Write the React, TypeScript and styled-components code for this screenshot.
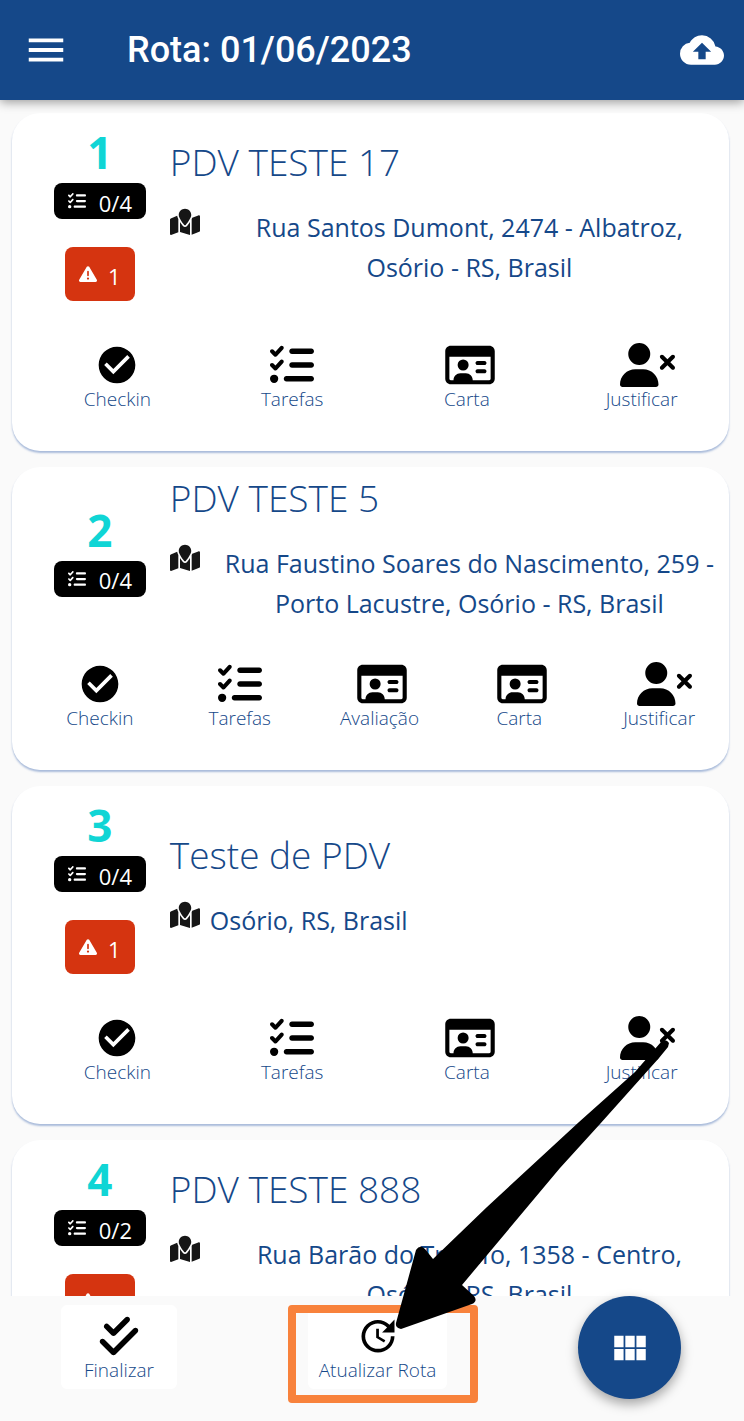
import React from "react";
import styled, { createGlobalStyle } from "styled-components";
import {
  FaCheckDouble,
  FaListCheck,
  FaMapLocation,
  FaRegIdCard,
  FaTriangleExclamation,
  FaUserXmark,
} from "react-icons/fa6";
import { MdBackup, MdCheckCircle, MdMenu, MdUpdate, MdViewModule } from "react-icons/md";

const navy = "#154889";

const GlobalStyle = createGlobalStyle`
  *, *::before, *::after { box-sizing: border-box; }
  body {
    margin: 0;
    background: #fafafa;
    color: ${navy};
    font-family: "Open Sans", Lato, sans-serif;
    font-weight: 300;
  }
  button {
    margin: 0;
    padding: 0;
    border: 0;
    background: none;
    color: inherit;
    font: inherit;
    cursor: pointer;
  }
  svg { display: block; flex: none; }
`;

const Screen = styled.div`
  display: flex;
  flex-direction: column;
  height: 100vh;
  overflow: hidden;
`;

const TopBar = styled.header`
  display: flex;
  align-items: center;
  flex: none;
  height: 100px;
  padding: 0 20px 0 23px;
  background: ${navy};
  color: #fff;
  box-shadow: 0 2px 10px rgba(0, 0, 0, 0.4);
  z-index: 1;
`;

const BarTitle = styled.h1`
  flex: 1;
  margin: 0 0 0 58px;
  font: 500 36px/48px Roboto, sans-serif;
`;

const BarButton = styled.button<{ $size: number }>`
  svg {
    width: ${(p) => p.$size}px;
    height: ${(p) => p.$size}px;
  }
`;

const StopList = styled.main`
  display: flex;
  flex-direction: column;
  gap: 16px;
  flex: 1;
  min-height: 0;
  padding: 13px 15px 0 12px;
  overflow: hidden;
`;

const Card = styled.article`
  flex: none;
  padding: 8px 0 40px 18px;
  border-radius: 28px;
  background: #fff;
  box-shadow: 0 2px 2px rgba(21, 72, 160, 0.35);
`;

const Summary = styled.div`
  display: flex;
  align-items: center;
`;

const Status = styled.div`
  display: flex;
  flex-direction: column;
  align-items: center;
  width: 20%;
  padding-bottom: 3px;
`;

const Order = styled.span`
  color: #10d5d5;
  font: 700 44px/62px "Noto Sans", sans-serif;
`;

const Badge = styled.span<{ $alert?: boolean }>`
  display: flex;
  align-items: center;
  gap: ${(p) => (p.$alert ? 11 : 13)}px;
  height: ${(p) => (p.$alert ? 54 : 36)}px;
  margin-top: ${(p) => (p.$alert ? 28 : 0)}px;
  padding: 0 14px;
  border-radius: 8px;
  background: ${(p) => (p.$alert ? "#d53410" : "#000")};
  color: #fff;
  font-size: 22px;
  line-height: 24px;
  font-weight: 400;

  svg {
    width: 18px;
    height: 18px;
  }
`;

const BadgeText = styled.span`
  padding-top: 3px;
`;

const Details = styled.div`
  display: flex;
  flex-direction: column;
  flex: 1;
  gap: 22px;
`;

const StopName = styled.h2`
  margin: 0;
  font-size: 37px;
  line-height: 46px;
  font-weight: 300;
`;

const Place = styled.div`
  display: flex;
  align-items: flex-start;
  gap: 10px;

  svg {
    width: 30px;
    height: 30px;
    color: #161616;
  }
`;

const Address = styled.p`
  margin: 0;
  font-size: 25px;
  line-height: 40px;
  font-weight: 400;
  text-align: center;
`;

const Actions = styled.nav`
  display: flex;
  padding-top: 39px;
`;

const Action = styled.button`
  display: flex;
  flex: 1 1 0;
  flex-direction: column;
  align-items: center;
`;

const ActionIcon = styled.span<{ $glyphWidth: number }>`
  display: flex;
  width: 44px;
  height: 44px;
  color: #000;

  svg {
    width: ${(p) => p.$glyphWidth}px;
    height: 44px;
  }
`;

const ActionLabel = styled.span`
  font-size: 19px;
  line-height: 24px;
`;

const Footer = styled.footer`
  display: flex;
  justify-content: space-between;
  align-items: flex-start;
  flex: none;
  height: 125px;
  padding: 0 63px 0 61px;
`;

const FooterAction = styled.button<{ $minWidth: number }>`
  display: flex;
  flex-direction: column;
  align-items: center;
  min-width: ${(p) => p.$minWidth}px;
  height: 84px;
  margin-top: 9px;
  padding-top: 9px;
  border-radius: 6px;
  background: #fff;

  svg {
    width: 44px;
    height: 44px;
    color: #000;
  }
`;

const Highlighted = styled.div`
  position: relative;
`;

const Frame = styled.span`
  position: absolute;
  top: 9px;
  right: -31px;
  bottom: -14px;
  left: -20px;
  border: 8px solid #f8823c;
  border-radius: 4px;
  pointer-events: none;
`;

const Pointer = styled.svg`
  position: absolute;
  right: -225px;
  bottom: 60px;
  z-index: 2;
  pointer-events: none;
`;

const Fab = styled.button`
  display: flex;
  align-items: center;
  justify-content: center;
  width: 103px;
  height: 103px;
  border-radius: 50%;
  background: ${navy};
  color: #fff;
  box-shadow: 0 5px 12px rgba(0, 0, 0, 0.35);

  svg {
    width: 42px;
    height: 42px;
  }
`;

type ActionKind = "checkin" | "tarefas" | "avaliacao" | "carta" | "justificar";

const actionKinds: Record<ActionKind, { label: string; icon: React.ReactNode; width: number }> = {
  checkin: { label: "Checkin", icon: <MdCheckCircle />, width: 44 },
  tarefas: { label: "Tarefas", icon: <FaListCheck />, width: 44 },
  avaliacao: { label: "Avaliação", icon: <FaRegIdCard />, width: 50 },
  carta: { label: "Carta", icon: <FaRegIdCard />, width: 50 },
  justificar: { label: "Justificar", icon: <FaUserXmark />, width: 55 },
};

interface Stop {
  name: string;
  address: string;
  tasks: string;
  alerts?: number;
  actions: ActionKind[];
}

const basic: ActionKind[] = ["checkin", "tarefas", "carta", "justificar"];

const stops: Stop[] = [
  {
    name: "PDV TESTE 17",
    address: "Rua Santos Dumont, 2474 - Albatroz, Osório\u00a0- RS, Brasil",
    tasks: "0/4",
    alerts: 1,
    actions: basic,
  },
  {
    name: "PDV TESTE 5",
    address: "Rua Faustino Soares do Nascimento, 259 - Porto Lacustre, Osório - RS, Brasil",
    tasks: "0/4",
    actions: ["checkin", "tarefas", "avaliacao", "carta", "justificar"],
  },
  { name: "Teste de PDV", address: "Osório, RS, Brasil", tasks: "0/4", alerts: 1, actions: basic },
  {
    name: "PDV TESTE 888",
    address: "Rua Barão do Triunfo, 1358 - Centro, Osório\u00a0- RS, Brasil",
    tasks: "0/2",
    alerts: 1,
    actions: basic,
  },
];

function StopCard({ stop, order }: { stop: Stop; order: number }) {
  return (
    <Card>
      <Summary>
        <Status>
          <Order>{order}</Order>
          <Badge>
            <FaListCheck />
            <BadgeText>{stop.tasks}</BadgeText>
          </Badge>
          {stop.alerts && (
            <Badge $alert>
              <FaTriangleExclamation />
              <BadgeText>{stop.alerts}</BadgeText>
            </Badge>
          )}
        </Status>
        <Details>
          <StopName>{stop.name}</StopName>
          <Place>
            <FaMapLocation />
            <Address>{stop.address}</Address>
          </Place>
        </Details>
      </Summary>
      <Actions>
        {stop.actions.map((kind) => (
          <Action key={kind} type="button">
            <ActionIcon $glyphWidth={actionKinds[kind].width}>{actionKinds[kind].icon}</ActionIcon>
            <ActionLabel>{actionKinds[kind].label}</ActionLabel>
          </Action>
        ))}
      </Actions>
    </Card>
  );
}

export default function App() {
  return (
    <>
      <GlobalStyle />
      <Screen>
        <TopBar>
          <BarButton type="button" $size={46} aria-label="Menu">
            <MdMenu />
          </BarButton>
          <BarTitle>Rota: 01/06/2023</BarTitle>
          <BarButton type="button" $size={44} aria-label="Enviar">
            <MdBackup />
          </BarButton>
        </TopBar>
        <StopList>
          {stops.map((stop, i) => (
            <StopCard key={stop.name} stop={stop} order={i + 1} />
          ))}
        </StopList>
        <Footer>
          <FooterAction type="button" $minWidth={116}>
            <FaCheckDouble />
            <ActionLabel>Finalizar</ActionLabel>
          </FooterAction>
          <Highlighted>
            <FooterAction type="button" $minWidth={139}>
              <MdUpdate />
              <ActionLabel>Atualizar Rota</ActionLabel>
            </FooterAction>
            <Frame />
            <Pointer width="280" height="292" viewBox="0 0 280 292" aria-hidden="true">
              <path
                d="M269 5 Q274 1 277 6 L276 10 L267 21 L208 87 L168 131 L70 248 L82 259 Q86 264 80 267 L9 292 Q3 291 4 286 L24 213 Q28 207 33 212 L41 222 L95 170 L187 85 L243 35 Z"
                fill="#000"
              />
            </Pointer>
          </Highlighted>
          <Fab type="button" aria-label="Mais opções">
            <MdViewModule />
          </Fab>
        </Footer>
      </Screen>
    </>
  );
}
